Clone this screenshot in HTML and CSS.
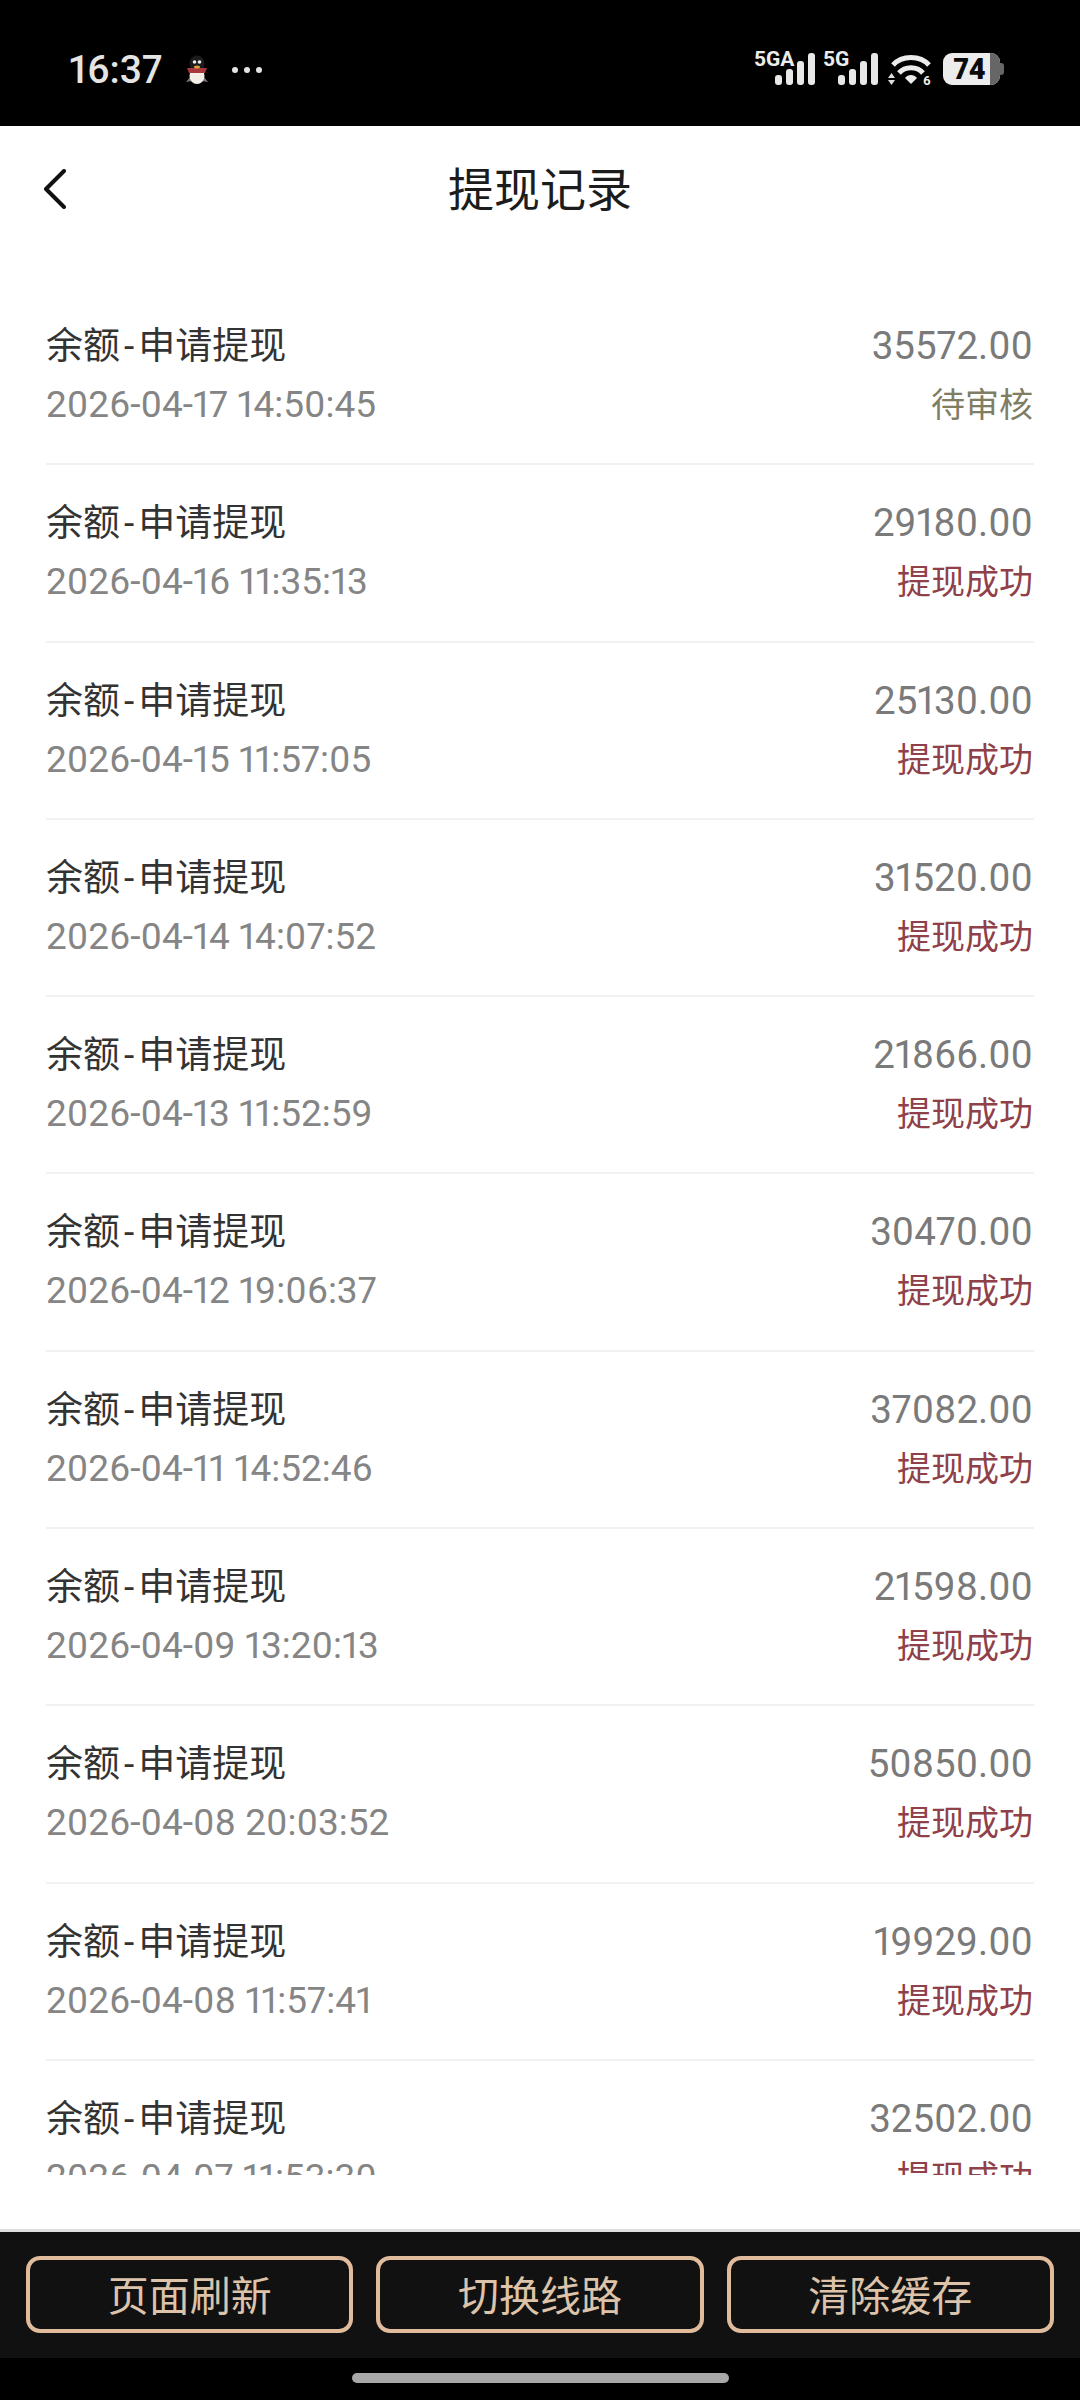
FILE: index.html
```html
<!DOCTYPE html>
<html lang="zh-CN">
<head>
  <meta charset="UTF-8">
  <title>提现记录</title>
  <link rel="stylesheet" href="styles.css">
</head>
<body>
  <div class="page">
    <div class="status-bar">
      <div class="status-left">
        <span class="clock">16:37</span>
        <svg class="penguin" width="26" height="30" viewBox="0 0 26 30">
          <path d="M6 22 L2 27 L8 26 Z M20 22 L24 27 L18 26 Z" fill="#777"/>
          <ellipse cx="13" cy="8.5" rx="7.5" ry="8" fill="#1c1c1c"/>
          <ellipse cx="13" cy="21" rx="7.5" ry="8" fill="#f4efe6"/>
          <circle cx="10.5" cy="7" r="1.8" fill="#eee"/>
          <circle cx="15.5" cy="7" r="1.8" fill="#eee"/>
          <path d="M3 13 H23 L21 18 H5 Z" fill="#a8383c"/>
          <ellipse cx="13" cy="12" rx="3" ry="1.5" fill="#d8a040"/>
        </svg>
        <span class="dots"><i></i><i></i><i></i></span>
      </div>
      <div class="status-right">
        <div class="signal signal-a">
          <span class="net">5GA</span>
          <span class="bars"><i class="b1"></i><i class="b2"></i><i class="b3"></i><i class="b4"></i></span>
        </div>
        <div class="signal signal-b">
          <span class="net">5G</span>
          <span class="bars"><i class="b1"></i><i class="b2"></i><i class="b3"></i><i class="b4"></i></span>
        </div>
        <svg class="wifi" width="44" height="36" viewBox="0 0 44 36">
          <path d="M5 12 C14 2 32 2 41 12" fill="none" stroke="#ececec" stroke-width="5"/>
          <path d="M11 20 C17 13 29 13 35 20" fill="none" stroke="#ececec" stroke-width="5"/>
          <path d="M17 25 C20 21 26 21 29 25 L23 31 Z" fill="#ececec"/>
          <path d="M0 25 L3.5 20 L7 25 Z M0 27 H7 L3.5 32 Z" fill="#ddd"/>
          <text class="wifi-six" x="35" y="32">6</text>
        </svg>
        <div class="battery">
          <span class="battery-num">74</span>
          <span class="battery-rest"></span>
          <span class="battery-cap"></span>
        </div>
      </div>
    </div>

    <div class="nav">
      <svg class="back" width="26" height="40" viewBox="0 0 26 40">
        <path d="M22 2 L4 20 L22 38" fill="none" stroke="#111" stroke-width="4" stroke-linecap="round" stroke-linejoin="round"/>
      </svg>
      <h1>提现记录</h1>
    </div>

    <div class="list">
      <div class="row">
        <div class="line"><span class="name">余额<span class="dash">-</span>申请提现</span><span class="amount">35572.00</span></div>
        <div class="line"><span class="time">2026-04-17 14:50:45</span><span class="state pending">待审核</span></div>
      </div>
      <div class="row">
        <div class="line"><span class="name">余额<span class="dash">-</span>申请提现</span><span class="amount">29180.00</span></div>
        <div class="line"><span class="time">2026-04-16 11:35:13</span><span class="state done">提现成功</span></div>
      </div>
      <div class="row">
        <div class="line"><span class="name">余额<span class="dash">-</span>申请提现</span><span class="amount">25130.00</span></div>
        <div class="line"><span class="time">2026-04-15 11:57:05</span><span class="state done">提现成功</span></div>
      </div>
      <div class="row">
        <div class="line"><span class="name">余额<span class="dash">-</span>申请提现</span><span class="amount">31520.00</span></div>
        <div class="line"><span class="time">2026-04-14 14:07:52</span><span class="state done">提现成功</span></div>
      </div>
      <div class="row">
        <div class="line"><span class="name">余额<span class="dash">-</span>申请提现</span><span class="amount">21866.00</span></div>
        <div class="line"><span class="time">2026-04-13 11:52:59</span><span class="state done">提现成功</span></div>
      </div>
      <div class="row">
        <div class="line"><span class="name">余额<span class="dash">-</span>申请提现</span><span class="amount">30470.00</span></div>
        <div class="line"><span class="time">2026-04-12 19:06:37</span><span class="state done">提现成功</span></div>
      </div>
      <div class="row">
        <div class="line"><span class="name">余额<span class="dash">-</span>申请提现</span><span class="amount">37082.00</span></div>
        <div class="line"><span class="time">2026-04-11 14:52:46</span><span class="state done">提现成功</span></div>
      </div>
      <div class="row">
        <div class="line"><span class="name">余额<span class="dash">-</span>申请提现</span><span class="amount">21598.00</span></div>
        <div class="line"><span class="time">2026-04-09 13:20:13</span><span class="state done">提现成功</span></div>
      </div>
      <div class="row">
        <div class="line"><span class="name">余额<span class="dash">-</span>申请提现</span><span class="amount">50850.00</span></div>
        <div class="line"><span class="time">2026-04-08 20:03:52</span><span class="state done">提现成功</span></div>
      </div>
      <div class="row">
        <div class="line"><span class="name">余额<span class="dash">-</span>申请提现</span><span class="amount">19929.00</span></div>
        <div class="line"><span class="time">2026-04-08 11:57:41</span><span class="state done">提现成功</span></div>
      </div>
      <div class="row">
        <div class="line"><span class="name">余额<span class="dash">-</span>申请提现</span><span class="amount">32502.00</span></div>
        <div class="line"><span class="time">2026-04-07 11:53:30</span><span class="state done">提现成功</span></div>
      </div>
    </div>

    <div class="footer">
      <button>页面刷新</button>
      <button>切换线路</button>
      <button>清除缓存</button>
    </div>
    <div class="home-area"><span class="home-pill"></span></div>
  </div>
</body>
</html>
```

FILE: styles.css
```css
* {
  box-sizing: border-box;
}

body {
  margin: 0;
  background: #fff;
  font-family: Roboto, "Noto Sans CJK SC", sans-serif;
  font-variant-numeric: proportional-nums;
}

.page {
  width: 1080px;
  height: 2400px;
  display: flex;
  flex-direction: column;
  overflow: hidden;
}

/* status bar */
.status-bar {
  height: 126px;
  background: #000;
  display: flex;
  align-items: center;
  justify-content: space-between;
  padding: 14px 80px 0 69px;
  flex: none;
}

.status-left {
  display: flex;
  align-items: center;
}

.clock {
  color: #e4e4e4;
  font-size: 39px;
  font-weight: 500;
  width: 115px;
}

.penguin {
  margin-right: 22px;
}

.dots {
  display: flex;
  gap: 6px;
}

.dots i {
  width: 6px;
  height: 6px;
  border-radius: 50%;
  background: #e4e4e4;
}

.status-right {
  display: flex;
  align-items: flex-end;
  height: 32px;
  margin-top: -2px;
}

.signal {
  position: relative;
  height: 32px;
  display: flex;
  justify-content: flex-end;
}

.signal-a {
  width: 61px;
  margin-right: 8px;
}

.signal-b {
  width: 55px;
  margin-right: 10px;
}

.net {
  position: absolute;
  left: 0;
  top: -4px;
  color: #ececec;
  font-size: 21px;
  font-weight: 700;
  line-height: 21px;
}

.bars {
  display: flex;
  align-items: flex-end;
  gap: 4px;
  height: 32px;
}

.bars i {
  width: 7px;
  border-radius: 3px;
  background: #e8e8e8;
}

.bars .b1 { height: 10px; }
.bars .b2 { height: 16px; }
.bars .b3 { height: 24px; }
.bars .b4 { height: 32px; }

.wifi {
  margin-bottom: -4px;
}

.wifi-six {
  fill: #ececec;
  font-size: 13px;
  font-weight: 700;
}

.battery {
  position: relative;
  width: 57px;
  height: 32px;
  margin-left: 11px;
  border-radius: 9px;
  background: #ececec;
  display: flex;
}

.battery-num {
  width: 47px;
  padding-left: 6px;
  color: #0a0a0a;
  font-size: 29px;
  font-weight: 900;
  line-height: 32px;
  text-align: center;
}

.battery-rest {
  flex: 1;
  background: #666;
  border-radius: 0 9px 9px 0;
}

.battery-cap {
  position: absolute;
  right: -4px;
  top: 10px;
  width: 4px;
  height: 12px;
  background: #666;
  border-radius: 0 3px 3px 0;
}

/* header */
.nav {
  position: relative;
  height: 124px;
  flex: none;
  display: flex;
  align-items: center;
  justify-content: center;
}

.back {
  position: absolute;
  left: 42px;
  top: 43px;
}

.nav h1 {
  margin: 0 0 5px 0;
  color: #1c1c1c;
  font-size: 46px;
  font-weight: 400;
}

/* records */
.list {
  height: 1887px;
  margin-top: 38px;
  padding: 0 46px;
  overflow: hidden;
  flex: none;
}

.row {
  height: 177.3px;
  padding-top: 28px;
  border-bottom: 2px solid #f1f1f1;
  display: flex;
  flex-direction: column;
  gap: 18px;
}

.line {
  display: flex;
  align-items: baseline;
  justify-content: space-between;
  height: 44px;
  padding-right: 1px;
}

.name {
  color: #333;
  font-size: 37px;
}

.dash {
  margin: 0 4px;
}

.amount {
  color: #7a7a7a;
  font-size: 38.5px;
}

.time {
  color: #858585;
  font-size: 37px;
}

.state {
  font-size: 34px;
}

.pending {
  color: #7f7d63;
}

.done {
  color: #8f4048;
}

/* bottom buttons */
.footer {
  margin-top: auto;
  height: 129px;
  flex: none;
  background: #111;
  border-top: 3px solid #dedede;
  display: flex;
  gap: 23px;
  padding: 24px 26px 0;
}

.footer button {
  flex: 1;
  height: 77px;
  border: 4px solid #e0bc9c;
  border-radius: 14px;
  background: #111;
  color: #dcc3aa;
  font-family: inherit;
  font-size: 41px;
  padding: 0 0 3px;
}

.home-area {
  height: 42px;
  flex: none;
  background: #000;
  display: flex;
  justify-content: center;
  padding-top: 15px;
}

.home-pill {
  width: 377px;
  height: 10px;
  border-radius: 5px;
  background: #a8a8a8;
}
```
